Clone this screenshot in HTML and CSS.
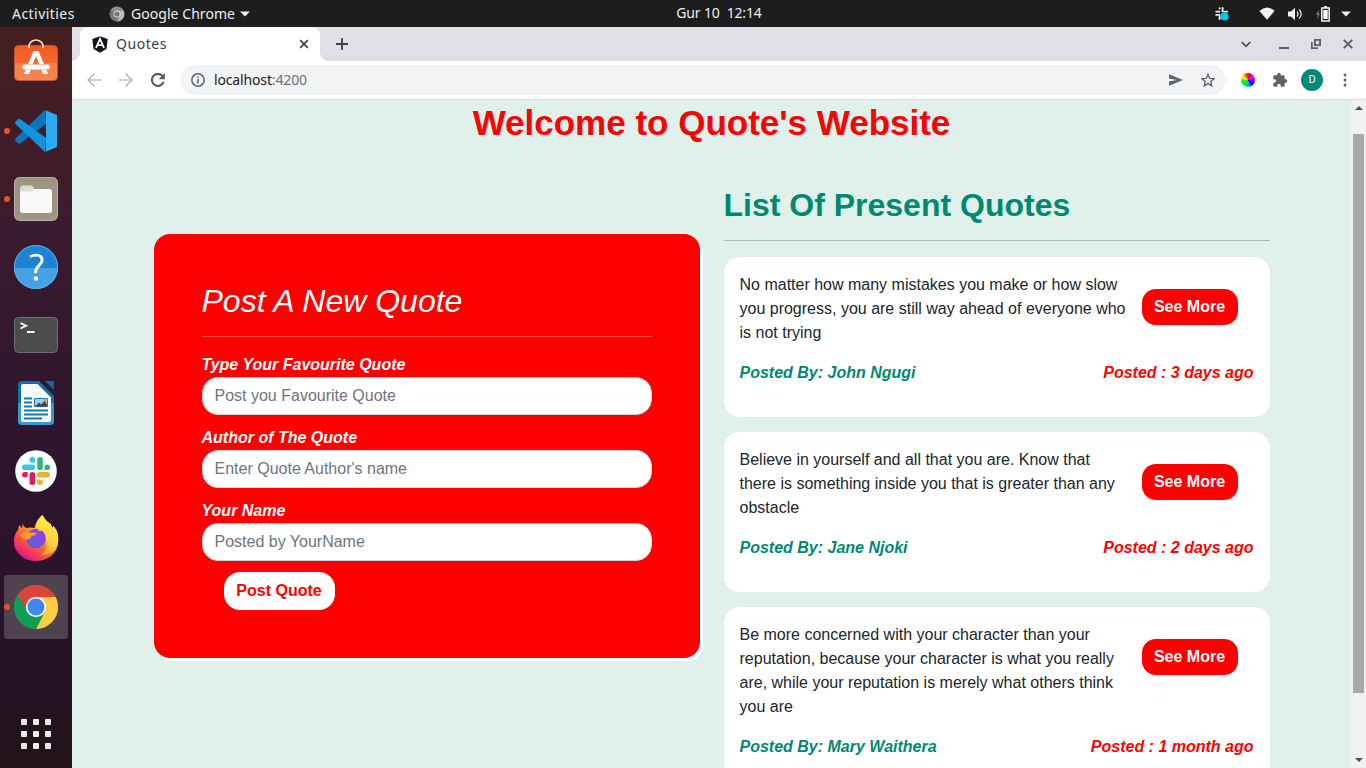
FILE: index.html
```html
<!DOCTYPE html>
<html lang="en">
<head>
<meta charset="utf-8">
<title>Quotes</title>
<link rel="stylesheet" href="styles.css">
</head>
<body>
<header class="topbar">
  <div class="topbar-left">
    <span class="activities">Activities</span>
    <svg class="app-icon" width="16" height="16" viewBox="0 0 16 16"><circle cx="8" cy="8" r="7.5" fill="#777"/><path d="M8 4.5h6.5A7.5 7.5 0 0 1 8 15.5l3-5.5z" fill="#bbb"/><path d="M1.5 4.3A7.5 7.5 0 0 1 14.5 4.5H8z" fill="#929292"/><circle cx="8" cy="8" r="3.5" fill="#ddd"/><circle cx="8" cy="8" r="2.6" fill="#777"/></svg>
    <span class="app-name">Google Chrome</span>
    <svg width="10" height="6" viewBox="0 0 10 6"><path d="M0 .5h10L5 5.5z" fill="#eee"/></svg>
  </div>
  <div class="clock">Gur 10&nbsp; 12:14</div>
  <div class="status">
    <svg width="16" height="16" viewBox="0 0 16 16"><g stroke="#eee" stroke-width="1.9" stroke-linecap="round"><path d="M8.600 2v3.400M2.200 5.600h3.300M10.500 5.600h2.600M2.200 8.900h3.300M5.600 10.500v2.600M5.600 2.200v.4M2.800 8.900h.2M12.500 5.600h.3"/></g><circle cx="10.500" cy="10.500" r="4" fill="#00c8f4"/></svg>
    <svg class="wifi" width="16" height="13" viewBox="0 0 16 13"><path d="M.4 4Q8-3.200 15.600 4L8 12.700z" fill="#f2f2f2"/></svg>
    <svg class="volume" width="16" height="14" viewBox="0 0 16 14"><path d="M1 4.500h3L8 .8v12.400L4 9.500H1z" fill="#f2f2f2"/><path d="M10 4.500q2 2.500 0 5M12.200 2.500q4 4.500 0 9" fill="none" stroke="#ddd" stroke-width="1.300"/></svg>
    <svg class="battery" width="15" height="16" viewBox="0 0 15 16"><path d="M4 3.500 1 8.500h1.800L2 13l3-5.500H3.200z" fill="#888"/><path d="M9 0h3v2H9z" fill="#eee"/><path d="M6.800 2h7.400v12.900H6.800z" fill="none" stroke="#f2f2f2" stroke-width="1.500"/><path d="M8.300 4h4.400v9H8.300z" fill="#fff"/></svg>
    <svg class="menu-caret" width="10" height="6" viewBox="0 0 10 6"><path d="M0 .5h10L5 5.500z" fill="#eee"/></svg>
  </div>
</header>
<div class="desktop">
  <nav class="dock">
    <div class="tile">
      <svg width="48" height="48" viewBox="0 2 48 48"><defs><linearGradient id="bag" x2="0" y2="1"><stop offset="0" stop-color="#f25a22"/><stop offset=".5" stop-color="#f36a30"/><stop offset=".51" stop-color="#f57d48"/><stop offset="1" stop-color="#f68550"/></linearGradient></defs><rect x="2.500" y="8.500" width="43" height="35" rx="4" fill="url(#bag)" stroke="#ba563b"/><path d="M17 11V9.500a7 6.500 0 0 1 14 0V11" fill="none" stroke="#f8dfb4" stroke-width="1.700"/><path fill-rule="evenodd" d="M21.500 14h5L36 37h-4.800l-1.700-4h-11l-1.700 4H12zM24 19l-3.600 9h7.200z" fill="#fff"/><rect x="10" y="27.500" width="28" height="5" rx="2.500" fill="#fff" stroke="#e9ac93" stroke-width=".6"/></svg>
    </div>
    <div class="tile running">
      <svg width="48" height="48" viewBox="0 0 48 48"><path d="M33 3 3.500 31.500q-1 1.300 0 2.500l2.500 2.300q1.200.7 2.500 0L34 17z" fill="#0876b8"/><path d="M33 45 3.500 17q-1-1.400 0-2.600L6 12.300q1.200-.8 2.500 0L34 31z" fill="#1192dc"/><path d="m33 3 12 5v32l-12 5q1-1 1-3V6q0-2-1-3z" fill="#2caaf2"/></svg>
    </div>
    <div class="tile running">
      <svg width="48" height="48" viewBox="0 0 48 48"><rect x="2.500" y="2.500" width="43" height="43" rx="5" fill="#9c9582" stroke="#b8b1a1"/><path d="M8 14q0-3.500 3-3.500h8q2 0 3 3l1 2v8H8z" fill="#dedbd3"/><path d="M8 16.500h12l2.500-2.500H37q3 0 3 3v18q0 3-3 3H11q-3 0-3-3z" fill="#faf9f7"/></svg>
    </div>
    <div class="tile">
      <svg width="48" height="48" viewBox="0 0 48 48"><circle cx="24" cy="24" r="22" fill="#1f83d5"/><path d="M2 25a22 21 0 0 0 44 0z" fill="#43a3e5"/><circle cx="24" cy="24" r="21.500" fill="none" stroke="#60b2e9"/><path d="M18 13.500Q22 12 24.500 12.100q5.500.2 5.500 5 0 3-3.500 6-3.200 2.900-3 7" fill="none" stroke="#fff" stroke-width="2.900"/><circle cx="23.800" cy="35.500" r="2.300" fill="#fff"/></svg>
    </div>
    <div class="tile">
      <svg width="48" height="48" viewBox="0 0 48 48"><rect x="2.500" y="6.500" width="43" height="35" rx="4" fill="#4c4c4c" stroke="#707070"/><path d="m8.500 12 5.500 2.700-5.500 2.800" fill="none" stroke="#fff" stroke-width="1.900"/><path d="M15 21h7.500" stroke="#fff" stroke-width="2"/></svg>
    </div>
    <div class="tile">
      <svg width="48" height="48" viewBox="0 0 48 48"><path d="M10 2h17l15 15v25q0 4-4 4H10q-4 0-4-4V6q0-4 4-4z" fill="#126fa4"/><path d="M6 24h36v18q0 4-4 4H10q-4 0-4-4z" fill="#3b98ca"/><path d="M11 5h14.500L39 18.500V41q0 2-2 2H11q-2 0-2-2V7q0-2 2-2z" fill="#f9f9f9"/><path d="M33 2h9v9z" fill="#14699a"/><path d="M12 19.500h8M12 23.500h8M12 27.500h8M12 31.500h24M12 35.500h24M12 39.500h18" stroke="#1578b0" stroke-width="1.800"/><path d="M22.500 19.500h13v8h-13z" fill="#9cccea" stroke="#1578b0"/><path d="m23 27.500 4-4 2 2 4-4 2.500 6z" fill="#45494c"/><circle cx="34" cy="21" r="1.500" fill="#e9ad27"/></svg>
    </div>
    <div class="tile">
      <svg width="48" height="48" viewBox="0 0 48 48"><circle cx="24" cy="24" r="20.800" fill="#fff"/><g stroke-width="5.600" stroke-linecap="round"><path d="M12.800 20.200h7.400" stroke="#36c5f0"/><path d="M28 12.800v7.400" stroke="#2eb67d"/><path d="M27.800 27.700h7.400" stroke="#ecb22e"/><path d="M20.300 27.800v7.400" stroke="#e01e5a"/></g><path d="M23 15.500h-2.800a2.800 2.800 0 1 1 2.800-2.800z" fill="#36c5f0"/><path d="M32.500 23v-2.800a2.800 2.800 0 1 1 2.800 2.800z" fill="#2eb67d"/><path d="M25.200 32.500H28a2.800 2.800 0 1 1-2.800 2.800z" fill="#ecb22e"/><path d="M15.700 25v2.800a2.800 2.800 0 1 1-2.800-2.800z" fill="#e01e5a"/></svg>
    </div>
    <div class="tile">
      <svg width="48" height="48" viewBox="0 1 48 48"><defs><linearGradient id="fox" x1=".85" y1=".1" x2=".25" y2=".95"><stop offset="0" stop-color="#fff44f"/><stop offset=".35" stop-color="#ffb52f"/><stop offset=".65" stop-color="#ff5b36"/><stop offset="1" stop-color="#e31587"/></linearGradient><linearGradient id="globe" x1="1" y1="0" x2="0" y2="1"><stop offset="0" stop-color="#a33cec"/><stop offset="1" stop-color="#5561d9"/></linearGradient><linearGradient id="flame" x1=".6" y1="0" x2=".3" y2="1"><stop offset="0" stop-color="#fff04a"/><stop offset=".6" stop-color="#ffd23c"/><stop offset="1" stop-color="#ff9a2e"/></linearGradient></defs><path d="M11 9q0 4 3.500 5 4-1 8 0 2-9 8-13 2 5 8 9l2 4 1-2q6 7 4.500 17a22 19 0 0 1-44-2Q2 20 6 16l1-5 3 3z" fill="url(#fox)"/><path d="M24 14q1-8 6.500-13 2 5 8 9l2 4 1-2q6 7 4.500 17-3 12-17 12 8-6 5-16-2-9-10-11z" fill="url(#flame)"/><circle cx="24" cy="24.500" r="9.800" fill="url(#globe)"/><path d="M26 14q7 1 7.500 5-4-3-7-2z" fill="#ffcf38"/><path d="M8 21q3-2.500 7-2.500l8 .3q2 0 1.500 1.200-1 1.500-5 2-.5 3-4 3.500-4 .5-7.500-4.500z" fill="#ff9d2a"/></svg>
    </div>
    <div class="tile running active">
      <svg width="48" height="48" viewBox="0 0 48 48"><circle cx="24" cy="24" r="22" fill="#109d58"/><path d="M24 14h19.600A22 22 0 0 1 24 46l8.700-17z" fill="#ffcd40"/><path d="M5.500 12A22 22 0 0 1 43.600 14H24l-9 5-.5 9z" fill="#db4437"/><path d="m5.500 12 10 17 7.500 5 9.700-5L24 46A22 22 0 0 1 5.500 12z" fill="#109d58"/><circle cx="24" cy="24" r="10.200" fill="#f1f1f1"/><circle cx="24" cy="24" r="8.400" fill="#4285f4"/></svg>
    </div>
    <div class="tile apps">
      <i></i><i></i><i></i><i></i><i></i><i></i><i></i><i></i><i></i>
    </div>
  </nav>
  <div class="browser">
    <div class="tabstrip">
      <div class="tab">
        <svg width="16" height="17" viewBox="0 0 16 17"><path d="m8 .3 7.700 2.600-1.200 10L8 16.700l-6.500-3.800L.3 2.900z" fill="#10141e"/><path d="m4 12 4-9.200L12 12M5.500 9.200h5" fill="none" stroke="#fff" stroke-width="1.800"/></svg>
        <span class="tab-title">Quotes</span>
        <svg width="10" height="10" viewBox="0 0 10 10"><path d="m1.200 1.200 7.600 7.600m0-7.600L1.200 8.800" stroke="#3c4043" stroke-width="1.700"/></svg>
      </div>
      <svg class="new-tab" width="12" height="12" viewBox="0 0 12 12"><path d="M6 0v12M0 6h12" stroke="#3c4043" stroke-width="1.800"/></svg>
      <div class="window-controls">
        <svg width="10" height="7" viewBox="0 0 10 7"><path d="m.7 1 4.300 4.300L9.300 1" fill="none" stroke="#46484b" stroke-width="1.700"/></svg>
        <svg width="10" height="10" viewBox="0 0 10 10"><path d="M0 9h10" stroke="#5b5d61" stroke-width="2"/></svg>
        <svg width="10" height="10" viewBox="0 0 10 10"><path d="M3.900.9h5.200v5.200H3.900zM.8 3v6.200H7" fill="none" stroke="#5b5d61" stroke-width="1.800"/></svg>
        <svg width="10" height="10" viewBox="0 0 10 10"><path d="m.8.8 8.400 8.400m0-8.400L.8 9.200" stroke="#5b5d61" stroke-width="1.900"/></svg>
      </div>
    </div>
    <div class="toolbar">
      <svg width="14" height="14" viewBox="0 0 14 14"><path d="M14 7H1.500M7.500.7 1.200 7l6.300 6.300" fill="none" stroke="#bdbec1" stroke-width="1.700"/></svg>
      <svg class="forward" width="14" height="14" viewBox="0 0 14 14"><path d="M0 7h12.500M6.500.7 12.800 7l-6.300 6.300" fill="none" stroke="#bdbec1" stroke-width="1.700"/></svg>
      <svg class="reload" width="14" height="14" viewBox="0 0 14 14"><path d="M12.600 8.800A6 6 0 1 1 11.400 2.900" fill="none" stroke="#55585c" stroke-width="2"/><path d="M13.900 0v6.200H7.700z" fill="#55585c"/></svg>
      <div class="omnibox">
        <svg width="14" height="14" viewBox="0 0 14 14"><circle cx="7" cy="7" r="6.200" fill="none" stroke="#5f6368" stroke-width="1.500"/><path d="M7 6v4.500M7 3.200v1.600" stroke="#5f6368" stroke-width="1.600"/></svg>
        <span class="url">localhost<span class="port">:4200</span></span>
        <svg width="14" height="12" viewBox="0 0 14 12"><path d="m0 .2 14 5.800L0 11.800V7.600L7.500 6 0 4.400z" fill="#5f6368"/></svg>
        <svg class="star" width="14" height="14" viewBox="0 0 14 14"><path d="m7 1.200 1.700 4.100 4.500.3-3.400 2.900 1 4.400L7 10.600l-3.800 2.300 1-4.400L.8 5.600l4.500-.3z" fill="none" stroke="#5f6368" stroke-width="1.300"/></svg>
      </div>
      <div class="color-wheel"></div>
      <svg class="puzzle" width="16" height="16" viewBox="0 0 24 24"><path d="M20.500 11H19V7c0-1.100-.9-2-2-2h-4V3.500a2.500 2.500 0 0 0-5 0V5H4c-1.100 0-2 .9-2 2v3.800h1.500a2.700 2.700 0 0 1 0 5.400H2V20c0 1.100.9 2 2 2h3.800v-1.500a2.700 2.700 0 0 1 5.400 0V22H17c1.100 0 2-.9 2-2v-4h1.500a2.500 2.500 0 0 0 0-5z" fill="#5f6368"/></svg>
      <div class="avatar">D</div>
      <svg class="kebab" width="4" height="14" viewBox="0 0 4 14"><g fill="#5f6368"><circle cx="2" cy="2" r="1.500"/><circle cx="2" cy="7" r="1.500"/><circle cx="2" cy="12" r="1.500"/></g></svg>
    </div>
    <div class="viewport">
      <main class="page">
        <h1 class="title">Welcome to Quote's Website</h1>
        <div class="columns">
          <form class="post-form">
            <h2 class="form-title">Post A New Quote</h2>
            <hr class="rule light">
            <label class="label" for="quote">Type Your Favourite Quote</label>
            <input class="field" id="quote" placeholder="Post you Favourite Quote">
            <label class="label" for="author">Author of The Quote</label>
            <input class="field" id="author" placeholder="Enter Quote Author's name">
            <label class="label" for="poster">Your Name</label>
            <input class="field" id="poster" placeholder="Posted by YourName">
            <button class="submit" type="button">Post Quote</button>
          </form>
          <section class="quotes">
            <h2 class="list-title">List Of Present Quotes</h2>
            <hr class="rule">
            <article class="quote">
              <div class="quote-main"><p class="quote-text">No matter how many mistakes you make or how slow you progress, you are still way ahead of everyone who is not trying</p><button class="more" type="button">See More</button></div>
              <div class="quote-meta"><span class="by">Posted By: John Ngugi</span><span class="when">Posted : 3 days ago</span></div>
            </article>
            <article class="quote">
              <div class="quote-main"><p class="quote-text">Believe in yourself and all that you are. Know that there is something inside you that is greater than any obstacle</p><button class="more" type="button">See More</button></div>
              <div class="quote-meta"><span class="by">Posted By: Jane Njoki</span><span class="when">Posted : 2 days ago</span></div>
            </article>
            <article class="quote">
              <div class="quote-main"><p class="quote-text">Be more concerned with your character than your reputation, because your character is what you really are, while your reputation is merely what others think you are</p><button class="more" type="button">See More</button></div>
              <div class="quote-meta"><span class="by">Posted By: Mary Waithera</span><span class="when">Posted : 1 month ago</span></div>
            </article>
          </section>
        </div>
      </main>
      <div class="scrollbar">
        <svg width="8" height="4" viewBox="0 0 8 4"><path d="M0 4 4 0l4 4z" fill="#505050"/></svg>
        <div class="thumb"></div>
        <svg class="arrow-down" width="8" height="4" viewBox="0 0 8 4"><path d="m0 0 4 4 4-4z" fill="#505050"/></svg>
      </div>
    </div>
  </div>
</div>
</body>
</html>
```
FILE: styles.css
```css
* { box-sizing: border-box; }
body {
  margin: 0;
  width: 1366px;
  height: 768px;
  overflow: hidden;
  display: flex;
  flex-direction: column;
  font-family: "Liberation Sans", Arial, sans-serif;
  font-size: 16px;
  line-height: 24px;
  color: #212529;
}
svg { display: block; flex: none; }

/* System bar */
.topbar {
  flex: none;
  height: 27px;
  background: #1d1d1d;
  color: #eee;
  font: 14px/26px "Noto Sans", sans-serif;
  display: grid;
  grid-template-columns: 1fr 120px 1fr;
}
.topbar-left, .status { display: flex; align-items: center; }
.topbar-left { padding-left: 12px; }
.activities { width: 63px; white-space: nowrap; letter-spacing: .45px; }
.app-icon { margin: 0 6px 0 34px; }
.app-name { width: 104px; margin-right: 5px; white-space: nowrap; letter-spacing: .05px; }
.clock { margin-left: 36px; margin-right: -36px; white-space: nowrap; text-align: center; letter-spacing: -.15px; }
.status { justify-content: flex-end; padding-right: 15px; }
.wifi { margin-left: 29px; }
.volume { margin-left: 12px; }
.battery { margin-left: 12px; }
.menu-caret { margin-left: 11px; }

.desktop { flex: 1; min-height: 0; display: flex; }

/* Dock */
.dock {
  flex: none;
  width: 72px;
  padding: 4px 4px 2px;
  display: flex;
  flex-direction: column;
  gap: 4px;
  background: linear-gradient(#471f20, #3a1b2e 28%, #2f162e 52%, #28132a 80%, #231419);
}
.tile {
  position: relative;
  flex: none;
  width: 64px;
  height: 64px;
  border-radius: 3px;
  display: flex;
  align-items: center;
  justify-content: center;
}
.active { background: #51424f; }
.running::before {
  content: "";
  position: absolute;
  left: 0;
  top: 29px;
  width: 6px;
  height: 6px;
  border-radius: 50%;
  background: #e95420;
}
.apps {
  margin-top: auto;
  display: grid;
  grid-template-columns: repeat(3, 6px);
  grid-auto-rows: 6px;
  gap: 6px;
  align-content: center;
  align-items: stretch;
}
.apps i { background: #f0efed; border-radius: 1px; }

/* Browser */
.browser { flex: 1; min-width: 0; display: flex; flex-direction: column; }
.tabstrip {
  flex: none;
  height: 34px;
  background: #dee0e5;
  display: flex;
  align-items: center;
  padding-left: 8px;
}
.tab {
  position: relative;
  width: 240px;
  height: 34px;
  padding: 0 11px 0 12px;
  border-radius: 8px 8px 0 0;
  background: #fff;
  display: flex;
  align-items: center;
  gap: 8px;
}
.tab::before, .tab::after {
  content: "";
  position: absolute;
  bottom: 0;
  width: 8px;
  height: 8px;
}
.tab::before { left: -8px; background: radial-gradient(circle at 0 0, #dee0e5 7.500px, #fff 8px); }
.tab::after { right: -8px; background: radial-gradient(circle at 100% 0, #dee0e5 7.500px, #fff 8px); }
.tab-title { flex: 1; font: 14px/20px "Noto Sans", sans-serif; color: #3c4043; letter-spacing: .55px; }
.new-tab { margin-left: 16px; }
.window-controls { margin-left: auto; padding-right: 13px; display: flex; align-items: center; gap: 22px; }
.window-controls svg:first-child { margin-right: 6px; }

.toolbar {
  flex: none;
  height: 39px;
  background: #fff;
  border-bottom: 1px solid #dadddc;
  display: flex;
  align-items: center;
  padding: 0 19px 0 15px;
}
.forward { margin-left: 18px; }
.reload { margin-left: 18px; }
.omnibox {
  flex: 1;
  height: 30px;
  margin-left: 15px;
  padding: 0 11px;
  border-radius: 15px;
  background: #f1f3f4;
  display: flex;
  align-items: center;
}
.url { flex: 1; padding-left: 9px; font: 14px/20px "Noto Sans", sans-serif; color: #202124; letter-spacing: -.15px; }
.port { color: #6d7175; }
.star { margin-left: 18px; }
.color-wheel {
  width: 14px;
  height: 14px;
  margin-left: 15px;
  border-radius: 50%;
  background: conic-gradient(#f00, #f0f 16%, #60f 30%, #00f 38%, #0af 48%, #0e5 58%, #0f0 72%, #ff0 82%, #f70 92%, #f00);
}
.puzzle { margin-left: 17px; }
.avatar {
  width: 22px;
  height: 22px;
  margin-left: 13px;
  border-radius: 50%;
  background: #00897b;
  color: #fff;
  font: 11px/22px Roboto, sans-serif;
  text-align: center;
}
.kebab { margin-left: 20px; }

/* Page */
.viewport { flex: 1; min-height: 0; display: flex; }
.page { flex: 1; min-width: 0; overflow: hidden; background: #e0f0ea; }
.title {
  margin: 2px 0 0;
  text-align: center;
  font-size: 35px;
  line-height: 42px;
  color: #f00;
}
.columns {
  width: 1116px;
  margin: 42px auto 0;
  display: grid;
  grid-template-columns: 1fr 1fr;
  gap: 24px;
  align-items: start;
}
.rule { height: 1px; margin: 16px 0; border: 0; background: #acbab6; }
.rule.light { background: #ff5030; }

.post-form {
  margin-top: 48px;
  height: 424px;
  padding: 48px;
  border-radius: 16px;
  background: #f00;
  box-shadow: 3px 3px 0 #fff;
}
.form-title { margin: 0; font-size: 32px; line-height: 38px; font-weight: 400; font-style: italic; color: #fff; }
.label { display: block; color: #fff; font-weight: 700; font-style: italic; }
.field {
  display: block;
  width: 100%;
  height: 38px;
  margin-bottom: 11px;
  padding: 6px 12px;
  border: 1px solid #ced4da;
  border-radius: 16px;
  background: #fff;
  font: inherit;
}
.field::placeholder { color: #6c757d; opacity: 1; }
.submit, .more {
  display: block;
  padding: 0;
  border: 0;
  font: 700 16px/24px "Liberation Sans", Arial, sans-serif;
}
.submit { width: 111px; height: 38px; margin-left: 22px; border-radius: 16px; background: #fff; color: #f00; }
.more { flex: none; width: 96px; height: 36px; margin: 16px 0 0 12px; border-radius: 14px; background: #f00; color: #fff; }

.list-title { margin: 0; font-size: 32px; line-height: 38px; color: #00896f; }
.quote { margin-bottom: 15px; padding: 16px; height: 160px; border-radius: 16px; background: #fff; }
.quote:last-child { height: 184px; }
.quote-main { display: flex; align-items: flex-start; }
.quote-text { width: 390px; margin: 0 0 16px; }
.quote-meta { display: flex; justify-content: space-between; font-weight: 700; font-style: italic; }
.by { color: #00896f; }
.when { color: #f00; }

.scrollbar {
  flex: none;
  width: 15px;
  background: #f1f1f1;
  display: flex;
  flex-direction: column;
  align-items: center;
  padding: 6px 0;
}
.thumb { width: 11px; height: 559px; margin-top: 24px; background: #a8a8a8; }
.arrow-down { margin-top: auto; }
```
